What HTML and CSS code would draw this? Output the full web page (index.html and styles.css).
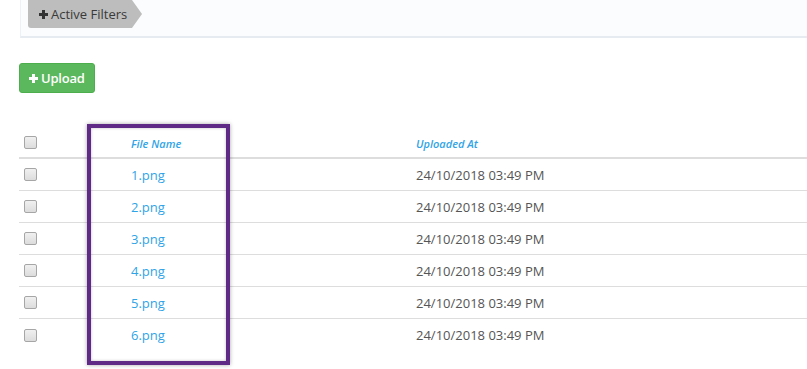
FILE: index.html
```html
<!DOCTYPE html>
<html lang="en">
<head>
    <meta charset="UTF-8">
    <title>Files</title>
    <link rel="stylesheet" href="styles.css">
</head>
<body>
    <!-- Filters panel -->
    <div class="filters-bar">
        <span class="filter-tag">
            <svg class="plus" width="9" height="9" viewBox="0 0 9 9"><path d="M3 0h3v3h3v3H6v3H3V6H0V3h3z" fill="#333"/></svg>
            Active Filters
        </span>
    </div>

    <button class="btn-upload">
        <svg class="plus" width="9" height="9" viewBox="0 0 9 9"><path d="M3 0h3v3h3v3H6v3H3V6H0V3h3z" fill="#fff"/></svg>
        Upload
    </button>

    <!-- Files table -->
    <div class="table-wrap">
        <div class="file-table">
            <div class="row head">
                <div class="cell check"><span class="checkbox"></span></div>
                <div class="cell name">File Name</div>
                <div class="cell date">Uploaded At</div>
            </div>
            <div class="row">
                <div class="cell check"><span class="checkbox"></span></div>
                <div class="cell name"><a href="#">1.png</a></div>
                <div class="cell date">24/10/2018 03:49 PM</div>
            </div>
            <div class="row">
                <div class="cell check"><span class="checkbox"></span></div>
                <div class="cell name"><a href="#">2.png</a></div>
                <div class="cell date">24/10/2018 03:49 PM</div>
            </div>
            <div class="row">
                <div class="cell check"><span class="checkbox"></span></div>
                <div class="cell name"><a href="#">3.png</a></div>
                <div class="cell date">24/10/2018 03:49 PM</div>
            </div>
            <div class="row">
                <div class="cell check"><span class="checkbox"></span></div>
                <div class="cell name"><a href="#">4.png</a></div>
                <div class="cell date">24/10/2018 03:49 PM</div>
            </div>
            <div class="row">
                <div class="cell check"><span class="checkbox"></span></div>
                <div class="cell name"><a href="#">5.png</a></div>
                <div class="cell date">24/10/2018 03:49 PM</div>
            </div>
            <div class="row last">
                <div class="cell check"><span class="checkbox"></span></div>
                <div class="cell name"><a href="#">6.png</a></div>
                <div class="cell date">24/10/2018 03:49 PM</div>
            </div>
        </div>
        <!-- highlight around the file name column -->
        <div class="highlight"></div>
    </div>
</body>
</html>
```

FILE: styles.css
```css
* {
    margin: 0;
    padding: 0;
    box-sizing: border-box;
}
body {
    font-family: 'Open Sans', 'Liberation Sans', Arial, sans-serif;
    font-size: 13px;
    color: #555;
    background: #fff;
    padding-left: 19px;
    overflow: hidden;
    width: 807px;
    height: 369px;
}
/* Filters panel */
.filters-bar {
    height: 38px;
    margin-left: 1px;
    margin-right: -10px;
    background: #fbfcfe;
    border-left: 1px solid #edf0f5;
    border-bottom: 2px solid #e6ebf2;
    padding-left: 7px;
}
.filter-tag {
    position: relative;
    display: inline-flex;
    align-items: center;
    gap: 3px;
    height: 28px;
    padding: 0 5px 0 11px;
    background: #bdbdbd;
    color: #3a3a3a;
    font-size: 13px;
    border-bottom-left-radius: 3px;
}
.filter-tag::after {
    content: "";
    position: absolute;
    right: -10px;
    top: 0;
    border-top: 14px solid transparent;
    border-bottom: 14px solid transparent;
    border-left: 10px solid #bdbdbd;
}
.plus {
    display: block;
}
.btn-upload {
    display: inline-flex;
    align-items: center;
    gap: 3px;
    margin-top: 25px;
    height: 30px;
    padding: 0 9px 0 9px;
    background: #5cb85c;
    border: 1px solid #4cae4c;
    border-radius: 3px;
    color: #fff;
    font-family: inherit;
    font-size: 13px;
    font-weight: 600;
    letter-spacing: -0.2px;
}
/* Files table */
.table-wrap {
    position: relative;
    margin-top: 34px;
}
.file-table {
    width: 800px;
}
.row {
    display: grid;
    grid-template-columns: 104px 285px 1fr;
    align-items: center;
    height: 32px;
    border-bottom: 1px solid #dddddd;
}
.row.head {
    height: 32px;
    border-bottom: 2px solid #dddddd;
}
.row.last {
    border-bottom: none;
}
.cell {
    padding: 0 8px;
}
.cell.check {
    padding-left: 5px;
    display: flex;
}
.head .name,
.head .date {
    color: #2fa4e7;
    font-size: 11px;
    font-style: italic;
    font-weight: 600;
    padding-top: 3px;
}
.name a {
    color: #2fa4e7;
    text-decoration: none;
}
.checkbox {
    width: 13px;
    height: 13px;
    border: 1px solid #a6a6a6;
    border-radius: 2px;
    background: linear-gradient(#f0f0f0, #dcdcdc);
}
.highlight {
    position: absolute;
    left: 68px;
    top: -3px;
    width: 143px;
    height: 241px;
    border: 4px solid #5e2a86;
    box-shadow: 0 0 4px rgba(0, 0, 0, 0.35), inset 0 0 3px rgba(0, 0, 0, 0.25);
}
```
